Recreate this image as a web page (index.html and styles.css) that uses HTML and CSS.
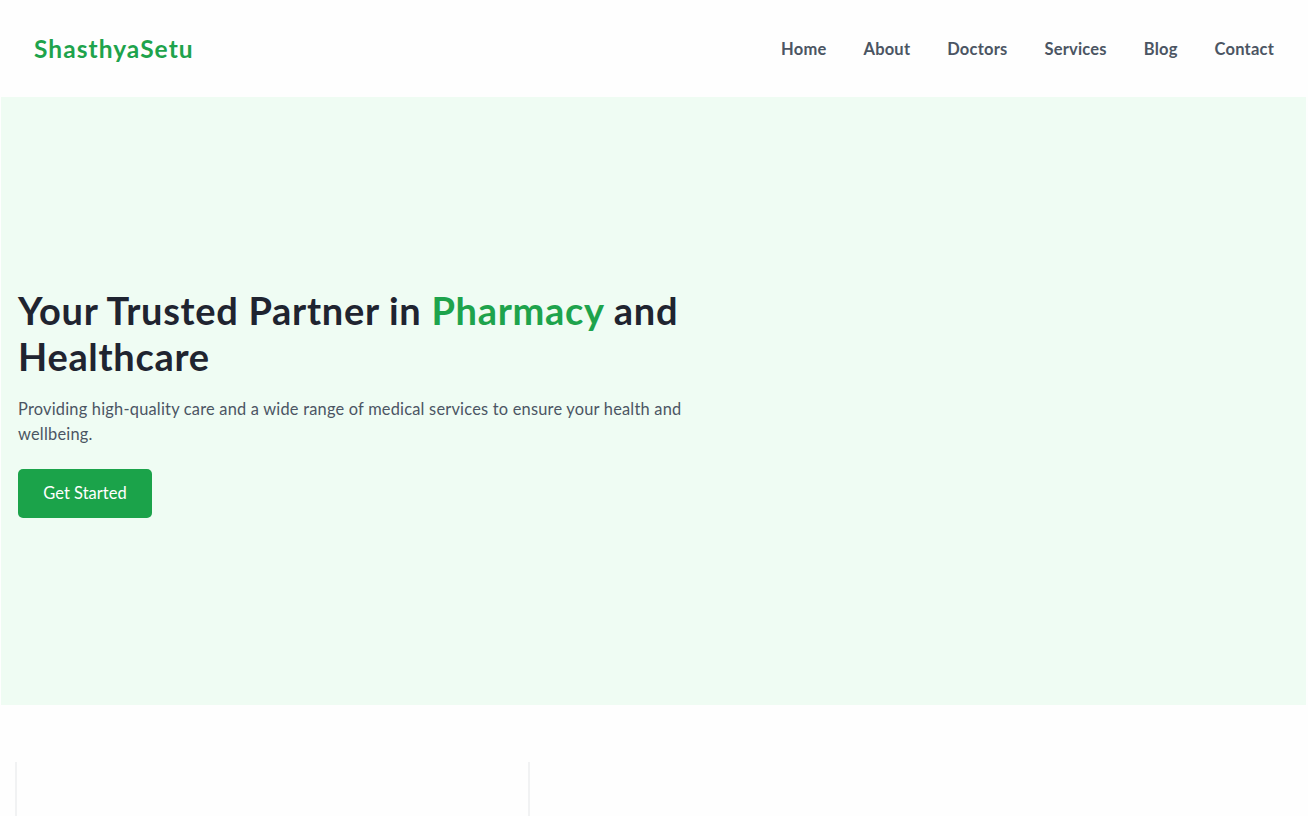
FILE: index.html
```html
<!DOCTYPE html>
<html lang="en">
<head>
<meta charset="utf-8">
<title>ShasthyaSetu</title>
<link rel="stylesheet" href="styles.css">
</head>
<body>
<header class="site-header">
  <a class="logo" href="#">ShasthyaSetu</a>
  <nav class="nav">
    <a href="#">Home</a>
    <a href="#">About</a>
    <a href="#">Doctors</a>
    <a href="#">Services</a>
    <a href="#">Blog</a>
    <a href="#">Contact</a>
  </nav>
</header>
<section class="hero">
  <div class="hero-content">
    <h1 class="hero-title">Your Trusted Partner in <span class="accent">Pharmacy</span> and Healthcare</h1>
    <p class="hero-text">Providing high-quality care and a wide range of medical services to ensure your health and wellbeing.</p>
    <a class="btn" href="#">Get Started</a>
  </div>
</section>
<section class="features">
  <div class="card"></div>
</section>
</body>
</html>
```
FILE: styles.css
```css
* { box-sizing: border-box; }
html, body { margin: 0; padding: 0; }
body {
  font-family: "Lato", "Open Sans", sans-serif;
  background: #fefefe;
  color: #1f2937;
  overflow: hidden;
  height: 816px;
}
a { text-decoration: none; }
.site-header {
  height: 97px;
  display: flex;
  align-items: center;
  justify-content: space-between;
  padding: 0 34px 0 34px;
}
.logo {
  color: #1ea34c;
  font-weight: 700;
  font-size: 24.5px;
  letter-spacing: 1.05px;
  margin-top: -1px;
}
.nav {
  display: flex;
  gap: 37px;
}
.nav a {
  color: #4b5563;
  font-size: 16.5px;
  font-weight: 700;
  letter-spacing: 0.2px;
}
.hero {
  margin: 0 2px 0 1px;
  height: 608px;
  background: #effcf3;
  display: flex;
  align-items: center;
  padding: 0 17px;
}
.hero-content {
  width: 700px;
  margin-top: 2px;
}
.hero-title {
  margin: 0;
  font-size: 38px;
  line-height: 46.5px;
  font-weight: 700;
  color: #1f2430;
  letter-spacing: 0.7px;
}
.accent { color: #1ea34c; }
.hero-text {
  margin: 16px 0 0;
  font-size: 16.4px;
  line-height: 25px;
  color: #4b5563;
  width: 690px;
  letter-spacing: 0.21px;
}
.btn {
  display: inline-block;
  margin-top: 23px;
  background: #1ba34a;
  color: #fff;
  font-size: 16.5px;
  line-height: 25px;
  padding: 12px 24px 12px;
  border-radius: 5px;
  width: 134px;
  text-align: center;
}
.features {
  padding: 57px 0 0 15px;
}
.card {
  width: 515px;
  height: 80px;
  border-left: 2px solid #f1f2f3;
  border-right: 2px solid #f1f2f3;
}
```
